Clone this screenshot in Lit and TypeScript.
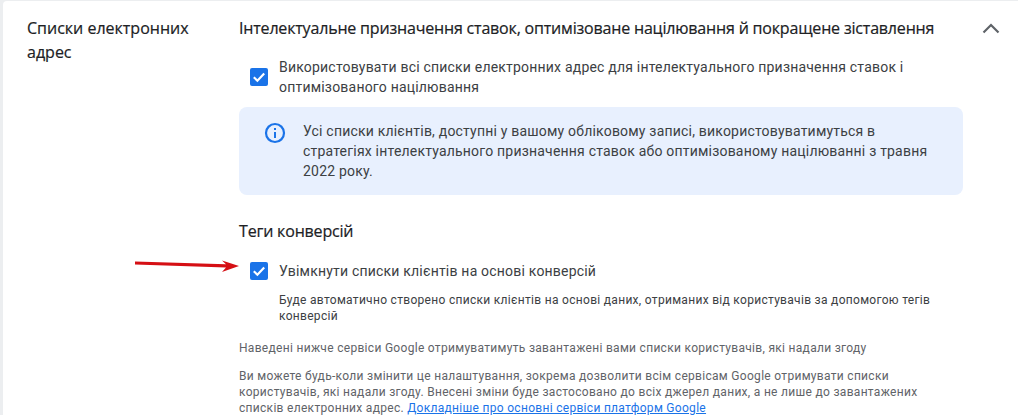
import { LitElement, html, css, svg } from "lit";
import { customElement } from "lit/decorators.js";

const check = html`<span class="cb"><svg width="18" height="18" viewBox="0 0 18 18"><path d="M3.8 9.2l3.6 3.5L14.2 5.6" fill="none" stroke="#fff" stroke-width="2.2"/></svg></span>`;

@customElement("app-root")
export class AppRoot extends LitElement {
  static styles = css`
    :host { display: block; width: 1018px; height: 415px; overflow: hidden; background: #eceef0; font-family: Roboto, sans-serif; position: relative; }
    .card { margin: 1px 0 0 3px; background: #fff; height: 414px; padding: 15px 55px 0 24px; display: grid; grid-template-columns: 212px 1fr; box-sizing: border-box; border-radius: 4px 0 0 0; }
    .title { font: 500 16px/24px "Open Sans", sans-serif; color: #202124; width: 175px; -webkit-text-stroke: 0.2px #202124; }
    .h { font: 500 16px/24px "Open Sans", sans-serif; color: #202124; white-space: nowrap; letter-spacing: -0.18px; -webkit-text-stroke: 0.2px #202124; }
    .head { display: flex; justify-content: space-between; align-items: center; width: 764px; }
    .chev { display: block; margin-right: 0; }
    .main { width: 724px; }
    .row { display: flex; gap: 11px; padding-left: 11px; font-size: 14px; line-height: 20px; color: #3c4043; letter-spacing: 0.2px; }
    .cb { width: 18px; height: 18px; flex: none; background: #1a73e8; border-radius: 2px; display: block; }
    .first { margin-top: 17px; align-items: center; }
    .info { margin-top: 10px; background: #e8f0fe; border-radius: 8px; height: 88px; box-sizing: border-box; padding: 14px 24px 0 24px; display: flex; gap: 16px; font-size: 14px; line-height: 20px; color: #3c4043; letter-spacing: 0.2px; }
    .info svg { flex: none; margin-top: 0; }
    .h2 { margin-top: 24px; }
    .second { margin-top: 18px; align-items: center; }
    .sub { margin: 11px 0 0 40px; font-size: 12px; line-height: 16px; color: #3c4043; letter-spacing: 0.3px; }
    .note { font-size: 12px; line-height: 16px; color: #5f6368; letter-spacing: 0.3px; }
    .n1 { margin-top: 16px; }
    .n2 { margin-top: 12px; }
    a { color: #1a73e8; text-decoration: underline; }
    .arrow { position: absolute; left: 135px; top: 258px; }
  `;
  render() {
    return html`
      <div class="card">
        <div class="title">Списки електронних адрес</div>
        <div class="main">
          <div class="head">
            <span class="h">Інтелектуальне призначення ставок, оптимізоване націлювання й покращене зіставлення</span>
            <svg class="chev" width="24" height="24" viewBox="0 0 24 24"><path d="M4.5 16.5L12 9l7.5 7.5" fill="none" stroke="#5f6368" stroke-width="2.2"/></svg>
          </div>
          <div class="row first">${check}<div>Використовувати всі списки електронних адрес для інтелектуального призначення ставок і<br>оптимізованого націлювання</div></div>
          <div class="info">
            <svg width="24" height="24" viewBox="0 0 24 24"><circle cx="12" cy="12" r="9" fill="none" stroke="#1a73e8" stroke-width="2.2"/><path d="M11 11h2v6h-2zM11 7h2v2h-2z" fill="#1a73e8"/></svg>
            <div>Усі списки клієнтів, доступні у вашому обліковому записі, використовуватимуться в<br>стратегіях інтелектуального призначення ставок або оптимізованому націлюванні з травня<br>2022 року.</div>
          </div>
          <div class="h h2">Теги конверсій</div>
          <div class="row second">${check}<div>Увімкнути списки клієнтів на основі конверсій</div></div>
          <div class="sub">Буде автоматично створено списки клієнтів на основі даних, отриманих від користувачів за допомогою тегів<br>конверсій</div>
          <div class="note n1">Наведені нижче сервіси Google отримуватимуть завантажені вами списки користувачів, які надали згоду</div>
          <div class="note n2">Ви можете будь-коли змінити це налаштування, зокрема дозволити всім сервісам Google отримувати списки<br>користувачів, які надали згоду. Внесені зміни буде застосовано до всіх джерел даних, а не лише до завантажених<br>списків електронних адрес. <a href="#">Докладніше про основні сервіси платформ Google</a></div>
        </div>
      </div>
      <svg class="arrow" width="106" height="16" viewBox="0 0 106 16">${svg`<path d="M0 3.5L91 6.3L87 2.5L104 8L87 14L91 9.5L0 6.5z" fill="#d50f14"/>`}</svg>
    `;
  }
}
